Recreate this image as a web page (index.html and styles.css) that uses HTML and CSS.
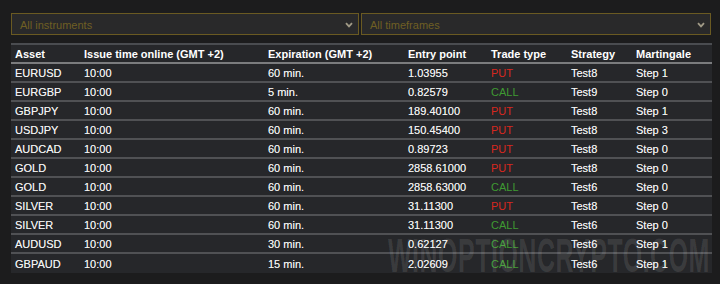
FILE: index.html
```html
<!DOCTYPE html>
<html>
<head>
<meta charset="utf-8">
<link rel="stylesheet" href="styles.css">
</head>
<body>
<div class="page">
  <div class="filters">
    <div class="select sel-left"><span>All instruments</span>
      <svg class="chev" width="8" height="6" viewBox="0 0 8 6"><path d="M1 1.2 L4 4.4 L7 1.2" fill="none" stroke="#a09a86" stroke-width="1.8"/></svg>
    </div>
    <div class="select sel-right"><span>All timeframes</span>
      <svg class="chev" width="8" height="6" viewBox="0 0 8 6"><path d="M1 1.2 L4 4.4 L7 1.2" fill="none" stroke="#a09a86" stroke-width="1.8"/></svg>
    </div>
  </div>
  <table class="signals">
    <thead>
      <tr><th class="c1">Asset</th><th class="c2">Issue time online (GMT +2)</th><th class="c3">Expiration (GMT +2)</th><th class="c4">Entry point</th><th class="c5">Trade type</th><th class="c6">Strategy</th><th class="c7">Martingale</th></tr>
    </thead>
    <tbody>
      <tr><td>EURUSD</td><td>10:00</td><td>60 min.</td><td>1.03955</td><td class="put">PUT</td><td>Test8</td><td>Step 1</td></tr>
      <tr><td>EURGBP</td><td>10:00</td><td>5 min.</td><td>0.82579</td><td class="call">CALL</td><td>Test9</td><td>Step 0</td></tr>
      <tr><td>GBPJPY</td><td>10:00</td><td>60 min.</td><td>189.40100</td><td class="put">PUT</td><td>Test8</td><td>Step 1</td></tr>
      <tr><td>USDJPY</td><td>10:00</td><td>60 min.</td><td>150.45400</td><td class="put">PUT</td><td>Test8</td><td>Step 3</td></tr>
      <tr><td>AUDCAD</td><td>10:00</td><td>60 min.</td><td>0.89723</td><td class="put">PUT</td><td>Test8</td><td>Step 0</td></tr>
      <tr><td>GOLD</td><td>10:00</td><td>60 min.</td><td>2858.61000</td><td class="put">PUT</td><td>Test8</td><td>Step 0</td></tr>
      <tr><td>GOLD</td><td>10:00</td><td>60 min.</td><td>2858.63000</td><td class="call">CALL</td><td>Test6</td><td>Step 0</td></tr>
      <tr><td>SILVER</td><td>10:00</td><td>60 min.</td><td>31.11300</td><td class="put">PUT</td><td>Test8</td><td>Step 0</td></tr>
      <tr><td>SILVER</td><td>10:00</td><td>60 min.</td><td>31.11300</td><td class="call">CALL</td><td>Test6</td><td>Step 0</td></tr>
      <tr><td>AUDUSD</td><td>10:00</td><td>30 min.</td><td>0.62127</td><td class="call">CALL</td><td>Test6</td><td>Step 1</td></tr>
      <tr><td>GBPAUD</td><td>10:00</td><td>15 min.</td><td>2.02609</td><td class="call">CALL</td><td>Test6</td><td>Step 1</td></tr>
    </tbody>
  </table>
  <div class="watermark">WINOPTIONCRYPTO.COM</div>
</div>
</body>
</html>
```
FILE: styles.css
```css
html, body {
  margin: 0;
  padding: 0;
  background: #1c1c1d;
}
.page {
  position: relative;
  width: 720px;
  height: 284px;
  overflow: hidden;
  padding: 13px 0 0 11px;
  box-sizing: border-box;
  font-family: "Liberation Sans", Arial, sans-serif;
  font-size: 11px;
  color: #f2f2f2;
}
.filters {
  display: flex;
  gap: 2px;
  width: 700px;
}
.select {
  box-sizing: border-box;
  height: 22px;
  border: 1px solid #6a5a22;
  background: #29292a;
  color: #6f5f24;
  display: flex;
  align-items: center;
  justify-content: space-between;
  padding: 1px 5px 0 8px;
}
.sel-left { width: 349px; }
.sel-right { width: 351px; }
.chev { display: block; }
.signals {
  margin-top: 8px;
  width: 701px;
  border-collapse: collapse;
  background: #26272a;
  table-layout: fixed;
}
.signals th {
  text-align: left;
  font-weight: bold;
  height: 17px;
  padding: 0 0 0 4px;
  border-top: 2px solid #4a4c50;
  border-bottom: 2px solid #7b7c7e;
  color: #ffffff;
}
.signals td {
  height: 17px;
  padding: 0 0 0 4px;
  border-bottom: 2px solid #505154;
  white-space: nowrap;
  text-shadow: 0 0 0.4px rgba(255, 255, 255, 0.6);
}
.signals td.put { text-shadow: none; }
.signals td.call { text-shadow: none; }
.signals tbody tr:last-child td { border-bottom: none; height: 19px; }
.c1 { width: 65px; }
.c2 { width: 180px; }
.c3 { width: 136px; }
.c4 { width: 79px; }
.c5 { width: 76px; }
.c6 { width: 61px; }
.c7 { width: auto; }
.put { color: #d8281f; }
.call { color: #3f9a32; }
.watermark {
  position: absolute;
  left: 388px;
  top: 232px;
  font-family: "Liberation Sans", Arial, sans-serif;
  font-weight: bold;
  font-size: 48px;
  line-height: 48px;
  color: rgba(255, 255, 255, 0.1);
  transform: scaleX(0.52);
  transform-origin: left top;
  white-space: nowrap;
  letter-spacing: 1px;
}
```
